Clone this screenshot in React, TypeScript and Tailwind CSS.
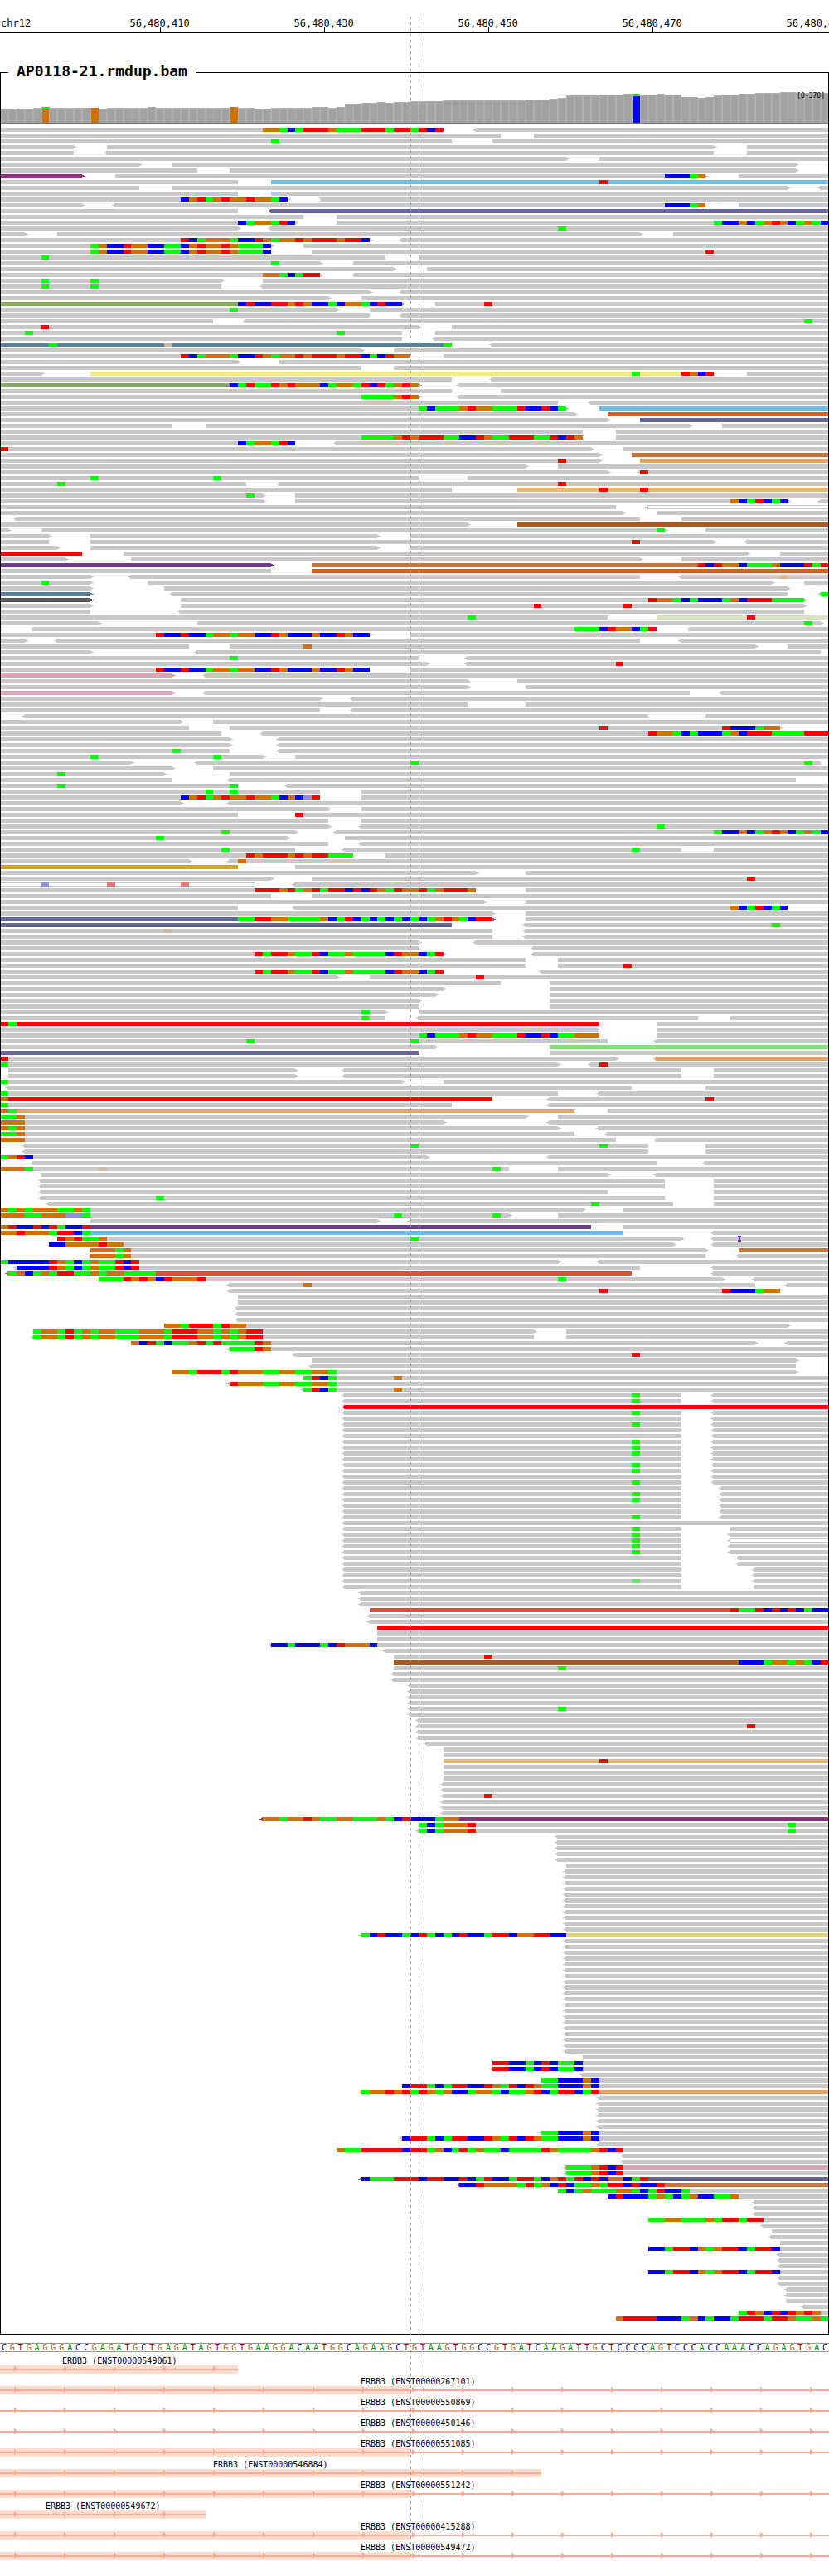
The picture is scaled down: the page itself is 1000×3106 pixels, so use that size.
import React from "react";

/*
 * Row notation for the alignment track, in columns of one reference base:
 *   12-40      aligned read from column 12 up to 40
 *   <12-40     read pointing left;  12-40>  read pointing right
 *   12-40=V    read tinted with READ_COLORS.V;  12-40~  outlined read
 *   @12ACG     mismatched bases starting at column 12 (lower case: low quality)
 *   !90        insertion before column 90
 */
const COLUMNS = 101;

const SEQ = {
  clipA: "TCCTCCAGGAGGCCTGCCCGCCTGCC",
  clipB: "TATTGAATCAAGAAAACTGGCAT",
  clipC: "AGGATAGAGGAAAGGGATTTGGAGAGTT",
  clipD: "CTTACATTCCTGATCTGAACCCGC",
};

function repeat(count: number, row: string): string[] {
  return Array.from({ length: count }, () => row);
}

const PILE = "<42-83 <87-101";
const PILE_A = "<42-83 <87-101 @77A";
const PILE2 = "<42-83 <88-101";
const PILE2_A = "<42-83 <88-101 @77A";

const ROWS: string[] = [
  "0-54 <58-101 @32GGACATTTGAAATTTATTATCT",
  "0-61 65-101",
  "0-55 60-101 @33A",
  "0-9> 13-87> 91-101",
  "0-9 <13-87 91-101",
  "0-69> 73-101",
  "0-17> 21-97>",
  "0-24 28-97>",
  "0-10>=P 14-86> 90-101 @81CCCAG",
  "0-29 33-101=S @73T",
  "0-17 21-96> <100-101",
  "0-29 33-101",
  "0-35> 39-101 @22CGTAGTGGTGGAC",
  "0-10> <14-86 90-101 @81CCCAG",
  "0-29 <33-101=V",
  "0-37 41-101",
  "0-36> 41-101 @29CAGGATC @87ACCGCAGTGCAGAC",
  "0-29> <33-101 @68A",
  "0-3> 7-78> 82-101",
  "0-45> <49-101 @22TCAGGGACCTGAGGTGTTTGTTC",
  "0-33> 37-101 @11AGCCTGGCCAACGTGGTGAAAC",
  "0-33 38-101 @11AGCCTGGCCAACGTGGTGAAAC @86T",
  "0-47 51-101 @5A",
  "0-39> 43-101 @33A",
  "0-48> 52-101",
  "0-39> 43-101 @32GGACATT",
  "0-27> 32-101 @5A @11A",
  "0-27 <32-101 @5A @11A",
  "0-45> <49-101",
  "0-40> 44-101",
  "0-49>=O 53-101 @29CTCCTTGTGCCACGGACTCC @59T",
  "0-41> 45-101 @28A",
  "0-45 <49-101",
  "0-26 <30-101 @98A",
  "0-51> 55-101 @5T",
  "0-49 53-101 @3A @41A",
  "0-49 <53-101",
  "0-55=D <60-101 @6A @20g @54A",
  "0-44> 48-101",
  "0-50 54-101 @22TCAGGGACCTGAGGTGTTTGTTCACTGG",
  "0-29> 34-101",
  "0-44 48-101",
  "0-5> 11-87>=Y 91-101 @77A @83TGCT",
  "0-55 <60-101",
  "0-51>=O <56-101 @28CATAATGTGGGCAGGATCTAGTG",
  "0-55 61-101",
  "0-51> <56-101 @44AAAAGTG",
  "0-68 <72-101",
  "0-69> 73-101=S @51ACAAAGTGGAAATCCTCA",
  "0-70> 74-101=Q",
  "0-74> 78-101=V",
  "0-21 25-84> 88-101",
  "0-71 75-101",
  "0-71 75-101 @44AAAAGTGTTTAACCTGAATTTAATCTG",
  "0-36 <41-101 @29CAGGATC",
  "0-72> 76-101 @0T",
  "0-73> 77-101=W",
  "0-73> 78-101=N @68T",
  "0-64> 68-101",
  "0-74> <78-101 @78T",
  "0-51 57-101 @11A @26A",
  "0-30 <34-101 @7A @68T",
  "0-55 63-101=L @73T @78T",
  "0-32> 36-101 @30A",
  "0-32> 36-96> <100-101 @89GCATCAC",
  "0-75 <79-101~",
  "0-76> 80-101",
  "<2-78 83-101",
  "0-57> 63-101=B",
  "0-1> 5-81> 86-101 @80A",
  "0-6> 11-46> 50-101",
  "0-6 11-87> <91-101 @77T",
  "0-7> 11-46> 50-101",
  "0-10=R 15-91> 95-101",
  "0-8> 16-78> 83-101",
  "0-33>=U 38-101=W @85TCTGGCAAAGCCCTAT",
  "0-33 38-101=Q",
  "0-11> <16-78 <83-101 @95g",
  "0-11> 18-94> 98-101 @5A",
  "0-11> 20-96>",
  "0-11>=D <21-96 <100-101 @100A",
  "0-11>=E 22-98> @79TGGACACCCAGCTTTAAAA",
  "0-11> 22-98> @65T @76T",
  "0-11 <22-98",
  "0-74 80-101=G @57A @91T",
  "0-12> 24-100> @98A",
  "0-0> <4-80 <84-101 @70AAACTGGCAT",
  `0-45> 50-101 @19${SEQ.clipA}`,
  "0-3> <7-78 <83-101",
  "0-23 28-92> 96-101 @37G",
  "0-11> <24-100",
  "0-51 <57-101 @28A",
  "0-52> <57-101 @75T",
  `0-45 50-101 @19${SEQ.clipA}`,
  "0-21>=K <25-101",
  "0-57> 63-101",
  "0-57> 64-101",
  "0-21>=K <25-84 <88-101",
  "0-39> <43-101",
  "0-57 64-101",
  "0-39 <43-101",
  "<3-79 86-101",
  "0-22> 26-101",
  "0-23 28-95> @73T @88TCCCAGG",
  "0-27 <32-101 @79TGGACACCCAGCTTTAAAATTT",
  "0-28> <34-101",
  "0-28> <34-101",
  "0-28 <34-101 @21A",
  "0-32> 36-101 @11A @26A",
  "0-16> <24-100 @50A @98A",
  "0-21> 26-101",
  "0-20> 28-101 @7A",
  "0-21 <28-97",
  "0-29 <35-101 @7A @28A",
  "0-39 44-101 @25A @28A",
  "0-39 44-101 @22CGTAGTGGTGGACGCcT",
  "0-22> <28-101",
  "0-40> 44-101",
  "0-29 36-101 @36T",
  "0-40 44-101",
  "0-40> <44-101 @80A",
  "0-36> <41-101 @27A @87ACCGCAGTGCAGAC",
  "0-35> 42-101 @19A",
  "0-40 <44-101",
  "0-36 <42-83 87-101 @27A @77A",
  "0-43 47-101 @30TGTTTGTGTTAAA",
  "0-23> <28-101 @29G",
  "0-29=M 36-101",
  "0-58> 64-101",
  "0-33> 38-101 @91T",
  "0-31~ <36-101 @5c @13t @22t",
  "0-58 64-101 @31TTTGTAGTATTCTCTGATGGTAGTTTG",
  "0-33 38-101",
  "0-59> 64-101",
  "0-29 <36-96 @89GCATCAC",
  "0-60> 64-101",
  "0-60>=V 64-101 @29AATTGGAAAAGCATCACACACACAGTGACTT",
  "0-55=V <64-101 @94A",
  "0-60 <64-101 @20g",
  "0-60 <64-101",
  "0-51> <58-101",
  "0-51 <65-101",
  `0-54> <65-101 @31${SEQ.clipB}`,
  "0-64 68-101",
  "0-64 68-101 @76T",
  `0-54 <66-101 @31${SEQ.clipB}`,
  "0-41> 45-101 @58T",
  "0-61 67-101",
  "0-54> 67-101",
  "0-53> 67-101",
  "0-51> 67-101",
  "0-51 67-101",
  "0-47> 51-101 @44A",
  "0-47 <51-85 89-101 @44A",
  "0-73=R 80-101 @1A",
  "0-73 80-101",
  "0-73 80-101 @51ACAAAGTGGAAATCCTCAAGGG",
  "0-74 <80-101 @30A @50A",
  "0-53> 67-101=F",
  "0-51=V 67-101",
  "0-75> <80-101=N @0T",
  "0-68> <72-101 @0A @73T",
  "1-36> <42-83 87-101",
  "1-36> <42-83 87-101",
  "0-49> 54-101 @0A",
  "<1-77 86-101",
  "0-68 <73-101 @0A",
  "0-60=R <67-101 @0G @86T",
  "0-55 <67-101 @0A",
  "0-70=N 74-101 @0GA",
  "0-64> 68-101 @0AAG",
  "0-54> <67-101 @0GGG",
  "0-68> <73-101 @0GAG",
  "0-70 <74-101 @0AAG",
  "0-75 <80-101 @0GGG",
  "<3-79 86-101 @50A @73A",
  "<3-79 86-101",
  "0-52> <67-101 @0AGTC",
  "<4-80 <86-101",
  "0-62 68-101 @0GGGA @12g @60A",
  "5-74> <80-101",
  "<5-81 87-101",
  "<5-81 87-101",
  "<5-74 87-101",
  "<5-81 87-101 @19A",
  "<6-82 87-101 @72A",
  "0-71> 76-101 @0GAGAGGGAAGA",
  "0-62> 68-101 @0GGGAAGGGccA @48A @60A",
  "11-46> <50-101",
  "0-72=U 76-101 @0GTCCTCTACCT",
  "0-76=S <87-101 @0GGTGGGATTCA",
  "7-83> <87-101 @7TGTAAG @50A !90",
  "6-82> <87-101 @6CCGGGGTGG",
  "11-86> 90-101=W @11GGGAG",
  "<11-86 <90-101 @11GGGAG",
  "0-68> <73-101 @0ACCCCCTGACAGAATCT",
  "<2-78 <87-101 @2CCCCTGACAGAATCT",
  "<1-77=T <87-101 @1AGCAGATTAAGAGGAAAA",
  "12-88> <92-101 @12AAATGTGCTGGGT @68A",
  "<28-92 <96-101 @37G",
  "<28-95 @73T @88TCCCAGG",
  "29-101",
  "29-101",
  ...repeat(3, "<29-101"),
  "20-96> @20GGATTTATGG",
  `4-65> 69-101 @4${SEQ.clipC}`,
  `<4-65 69-101 @4${SEQ.clipC}`,
  "16-92> <96-101 @16GCTACAAGTATAAAATG",
  "<28-101 @28AAATG",
  "<36-101 @77T",
  "38-97>",
  "<38-97",
  "21-97> @21GGATTTATGGGAAGGAAGGA",
  "37-101 @37ATCA @48G",
  "<28-101 @28TGGGAAGGAAGGA",
  "<37-101 @37ATCA @48G",
  PILE_A,
  PILE_A,
  "<42-101=R",
  PILE_A,
  PILE,
  PILE_A,
  PILE,
  PILE,
  PILE_A,
  PILE_A,
  PILE_A,
  PILE,
  PILE_A,
  PILE_A,
  PILE,
  PILE_A,
  PILE2,
  PILE2_A,
  PILE2_A,
  PILE2,
  PILE2,
  PILE2_A,
  "<42-101",
  "<42-83 89-101 @77A",
  "<42-83 <89-101 @77A",
  "<42-83 <89-101~ @77A",
  "<42-83 <89-101 @77A",
  "<42-83 <89-101 @77A",
  "<42-83 <90-101",
  "<42-83 <90-101",
  "<42-83 <92-101",
  "<42-83 <92-101",
  "<42-83 <92-101 @77a",
  "<42-83 <92-101",
  ...repeat(3, "<44-101"),
  "45-101=T @89TAATCTCTCACC",
  ...repeat(2, "<45-101"),
  "46-101=R",
  ...repeat(2, "46-101"),
  "<33-101 @33CCACCCACTGGGC",
  "<47-101",
  "48-101 @59T",
  "48-101=B @90CCCAGGAGACT",
  "48-101 @68A",
  ...repeat(2, "<48-101"),
  ...repeat(4, "<50-101"),
  "<50-101 @68A",
  "<50-101",
  "<51-101",
  "<51-101 @91T",
  ...repeat(2, "<51-101"),
  "<52-101",
  ...repeat(2, "54-101"),
  "54-101=L @73T",
  ...repeat(3, "54-101"),
  ...repeat(2, "<54-101"),
  "<54-101 @59T",
  ...repeat(3, "<54-101"),
  "<32-101=P @32GGAGGTGAAGGAAAGACTCCCAGG",
  "51-101 @51ACAGGGT @96A",
  "<51-101 @51ACAGGGT @96A",
  ...repeat(5, "<68-101"),
  "69-101",
  ...repeat(11, "<69-101"),
  "<44-101=J @44ACTCCACTACACTCCATTCGGTTCC",
  ...repeat(20, "<69-101"),
  "71-101",
  "60-101 @60TTCCACTCAAC",
  "<60-101 @60TTCCACTCAAC",
  "<71-101",
  "66-101 @66AACCCGC",
  `49-101 @49${SEQ.clipD}`,
  "<44-101=N @44AGGTGTATGAGCCAGGACAAGTCATTCAT",
  ...repeat(6, "<73-101"),
  "<66-101 @66AACCCGC",
  `<49-101 @49${SEQ.clipD}`,
  "<73-101",
  "41-101 @41GAATTTTTCTTAGCATAGAACAAAATGAAAAGTCT",
  ...repeat(2, "<76-101"),
  "<69-101=K @69AAAGTCT",
  "<69-101 @69AAAGTCT",
  "<44-101=V @44CAAATTTCTTCCTCATCCATTACGTATCTCGGCAT",
  "<56-101=W @56CCTGGGGATAGCTCAAGATTCTCCT",
  "68-101 @68ACAGAAAGGACATCCA",
  "74-101 @74CTCCCAGACAGCCAAG",
  ...repeat(3, "<92-101"),
  "79-101 @79AAGGAAAGATTATT",
  "<93-101",
  "94-101",
  "<94-101",
  "95-101",
  "79-101 @79CCATTCGAGTTCATTC",
  ...repeat(3, "<95-101"),
  "<79-101 @79CCATTCGAGTTCATTC",
  ...repeat(2, "<95-101"),
  ...repeat(3, "<96-101"),
  "<98-101",
  "90-101 @90ATGCTCTGTG",
  "75-101 @75GTTTTCCCAGCACCATTTATTGAAGA",
];

const GREY = "#c8c8c8";

const READ_COLORS: Record<string, string> = {
  P: "#8f2f80",
  S: "#6ebde6",
  V: "#666699",
  O: "#88aa60",
  D: "#5a7f99",
  Y: "#f2eb8c",
  Q: "#d06323",
  W: "#c8743c",
  N: "#dfa266",
  L: "#e8bb72",
  B: "#a85a20",
  R: "#ff0000",
  U: "#723b92",
  E: "#555555",
  K: "#dca3b5",
  M: "#d4aa00",
  G: "#d8e4bc",
  F: "#80e070",
  T: "#d85038",
  J: "#e8d078",
};

const BASE_COLORS: Record<string, string> = {
  A: "#00ff00",
  C: "#0000ff",
  G: "#d17105",
  T: "#ff0000",
  a: "#66e066",
  c: "#8f8fe0",
  g: "#d0b8a0",
  t: "#e07878",
};

const pct = (columns: number) => `${(columns / COLUMNS) * 100}%`;

function Arrow({ at, y, dir, fill }: { at: number; y: number; dir: -1 | 1; fill: string }) {
  return (
    <svg x={pct(at)} y={y} className="overflow-visible">
      <path
        d={dir < 0 ? "M0 0h-1v1h-1v1h-2v1h2v1h1v1h1z" : "M0 0v1h2v1h2v1h-2v1h-2v1z"}
        fill={fill}
      />
    </svg>
  );
}

function ReadRow({ row, y }: { row: string; y: number }) {
  return (
    <g>
      {row.split(" ").map((token, i) => {
        if (token[0] === "!") {
          return (
            <svg key={i} x={pct(Number(token.slice(1)))} y={y} className="overflow-visible">
              <path d="M-1 -1h4v2h-1v3h1v2h-4v-2h1v-3h-1z" fill="#7722dd" />
            </svg>
          );
        }
        if (token[0] === "@") {
          const m = /^@(\d+)(\w+)$/.exec(token)!;
          const start = Number(m[1]);
          return m[2]
            .split("")
            .map((base, j) => (
              <rect
                key={`${i}-${j}`}
                x={pct(start + j)}
                y={y}
                width={pct(1)}
                height={5}
                fill={BASE_COLORS[base]}
              />
            ));
        }
        const m = /^(<?)(\d+)-(\d+)(>?)(~?)(?:=(\w))?$/.exec(token)!;
        const start = Number(m[2]);
        const end = Number(m[3]);
        const fill = m[6] ? READ_COLORS[m[6]] : GREY;
        return (
          <g key={i}>
            <rect x={pct(start)} y={y} width={pct(end - start)} height={5} fill={fill} />
            {m[5] && (
              <rect x={pct(start)} y={y + 1} width={pct(end - start)} height={3} fill="#ffffff" />
            )}
            {m[1] && <Arrow at={start} y={y} dir={-1} fill={fill} />}
            {m[4] && <Arrow at={end} y={y} dir={1} fill={fill} />}
          </g>
        );
      })}
    </g>
  );
}

function Alignments() {
  return (
    <svg
      className="block w-full"
      height={ROWS.length * 7}
      shapeRendering="crispEdges"
      role="img"
      aria-label="Aligned reads"
    >
      {ROWS.map((row, i) => (
        <ReadRow key={i} row={row} y={i * 7} />
      ))}
    </svg>
  );
}

/* [number of columns, height of each bar] from left to right */
const COVERAGE: [number, number][] = [
  [2, 16], [2, 17], [1, 18], [1, 19], [6, 18], [1, 17], [5, 18], [1, 19], [9, 18],
  [1, 19], [2, 18], [2, 17], [5, 18], [2, 19], [1, 18], [1, 19], [2, 23], [2, 24],
  [1, 25], [1, 24], [2, 25], [4, 26], [10, 27], [3, 28], [1, 29], [1, 30], [4, 33],
  [3, 34], [2, 35], [2, 34], [1, 35], [2, 34], [2, 31], [1, 30], [1, 31], [1, 33],
  [2, 34], [2, 35], [3, 36], [2, 37], [4, 36],
];
const HEIGHTS = COVERAGE.flatMap(([n, h]) => Array.from({ length: n }, () => h));

const VARIANTS: Record<number, { fill: string; cap: number; dot: string }> = {
  5: { fill: "#d17105", cap: 2, dot: "#0000ff" },
  11: { fill: "#d17105", cap: 0, dot: "#00ff00" },
  28: { fill: "#d17105", cap: 0, dot: "#00ff00" },
  77: { fill: "#0000ff", cap: 3, dot: "#ff0000" },
};

function Coverage() {
  return (
    <svg
      className="block w-full"
      height={48}
      shapeRendering="crispEdges"
      role="img"
      aria-label="Coverage"
    >
      {HEIGHTS.map((h, i) => {
        const v = VARIANTS[i];
        const top = 47 - h;
        return (
          <g key={i}>
            <rect x={pct(i)} y={top} width={pct(1)} height={h} fill="#aeaeae" />
            <svg x={pct(i)} y={0} className="overflow-visible">
              <rect
                x={1}
                y={v ? top : top + 1}
                width={v ? 9 : 8}
                height={v ? h : h - 1}
                fill={v ? v.fill : "#a2a2a2"}
              />
              {v && <rect x={1} y={top} width={9} height={v.cap} fill="#00ff00" />}
              {v && <rect x={5} y={top} width={1} height={1} fill={v.dot} />}
            </svg>
          </g>
        );
      })}
      <rect x={0} y={47} width="100%" height={1} fill="#777777" />
      <text x="99.5%" y={17} textAnchor="end" fontSize={8} fill="#000000">
        [0-378]
      </text>
    </svg>
  );
}

const TICKS = [
  { column: 19.45, label: "56,480,410" },
  { column: 39.45, label: "56,480,430" },
  { column: 59.45, label: "56,480,450" },
  { column: 79.45, label: "56,480,470" },
  { column: 99.45, label: "56,480,490" },
];

function Ruler() {
  return (
    <svg className="block w-full overflow-hidden" height={40} role="img" aria-label="Genomic position">
      <text x={1} y={32} fontSize={12}>
        chr12
      </text>
      <g shapeRendering="crispEdges">
        <rect x={0} y={39} width="100%" height={1} />
        {TICKS.map((t) => (
          <rect key={t.label} x={pct(t.column)} y={32} width={1} height={7} />
        ))}
      </g>
      {TICKS.map((t) => (
        <text key={t.label} x={pct(t.column)} y={32} fontSize={12} textAnchor="middle">
          {t.label}
        </text>
      ))}
    </svg>
  );
}

const REFERENCE =
  "CGTGAGGGACCGAGATGCTGAGATAGTGGTGAAGGACAATGGCAGAAGCTGTAAGTGGCCGTGATCAAGATTGCTCCCCAGTCCCACCAAACCAGAGTGAC";

const LETTER_CLASS: Record<string, string> = {
  A: "text-[#009000]",
  C: "text-[#000090]",
  G: "text-[#a86000]",
  T: "text-[#a80000]",
};

function ReferenceSequence() {
  return (
    <div className="mt-[10px] grid h-[11px] grid-cols-[repeat(101,minmax(0,1fr))] border-y border-[#999999] text-center text-[10px] leading-[9px] font-medium">
      {REFERENCE.split("").map((base, i) => (
        <span key={i} className={LETTER_CLASS[base]}>
          {base}
        </span>
      ))}
    </div>
  );
}

/* label offset, line end and exon end are percentages of the view */
const TRANSCRIPTS = [
  { id: "ENST00000549061", label: 7.5, end: 28.7, exon: 28.7 },
  { id: "ENST00000267101", label: 43.5, end: 100, exon: 49.5 },
  { id: "ENST00000550869", label: 43.5, end: 100, exon: 0 },
  { id: "ENST00000450146", label: 43.5, end: 100, exon: 0 },
  { id: "ENST00000551085", label: 43.5, end: 100, exon: 49.5 },
  { id: "ENST00000546884", label: 25.7, end: 65.3, exon: 65.3 },
  { id: "ENST00000551242", label: 43.5, end: 100, exon: 49.5 },
  { id: "ENST00000549672", label: 5.5, end: 24.8, exon: 24.8 },
  { id: "ENST00000415288", label: 43.5, end: 100, exon: 49.5 },
  { id: "ENST00000549472", label: 43.5, end: 100, exon: 49.5 },
];

function Transcript({ id, label, end, exon }: (typeof TRANSCRIPTS)[number]) {
  const arrows = Array.from({ length: 17 }, (_, k) => 1.7 + 6 * k).filter((x) => x < end);
  return (
    <li>
      <p
        className="pt-[5px] text-[10px] leading-[10px] whitespace-pre"
        style={{ paddingLeft: `${label}%` }}
      >
        ERBB3 ({id})
      </p>
      <svg className="block w-full" height={10} shapeRendering="crispEdges" aria-hidden="true">
        <rect x={0} y={0} width={`${exon}%`} height={10} fill="#ffddcc" />
        <rect x={0} y={4} width={`${end}%`} height={2} fill="#ffaa99" />
        {arrows.map((x) => (
          <svg key={x} x={`${x}%`} y={1} className="overflow-visible">
            <path d="M0 0h1v1h1v1h1v3h-1v1h-1v1h-1z" fill="#ffaa99" />
          </svg>
        ))}
      </svg>
    </li>
  );
}

export default function App() {
  return (
    <main className="relative w-full overflow-hidden bg-white pb-[19px] font-['DejaVu_Sans_Mono',monospace] text-black">
      <Ruler />
      <section className="relative mt-[34px] pb-[15px]">
        <div className="flex h-[27px] items-center">
          <span className="h-px w-[10px] bg-black" />
          <h1 className="px-[10px] pb-[3px] text-[18px] leading-6 font-bold">
            AP0118-21.rmdup.bam
          </h1>
          <span className="h-px flex-1 bg-black" />
        </div>
        <Coverage />
        <div className="pt-[5px]">
          <Alignments />
        </div>
        <div className="pointer-events-none absolute inset-x-0 top-[13px] bottom-0 border-x border-b border-black" />
      </section>
      <ReferenceSequence />
      <ul className="mt-px">
        {TRANSCRIPTS.map((t) => (
          <Transcript key={t.id} {...t} />
        ))}
      </ul>
      <svg
        className="pointer-events-none absolute inset-x-0 top-5 h-[calc(100%-44px)] w-full"
        shapeRendering="crispEdges"
        aria-hidden="true"
      >
        {[50, 51].map((column) => (
          <line
            key={column}
            x1={pct(column + 0.05)}
            x2={pct(column + 0.05)}
            y1={0}
            y2="100%"
            stroke="#999999"
            strokeWidth={1}
            strokeDasharray="3 4"
          />
        ))}
      </svg>
    </main>
  );
}
